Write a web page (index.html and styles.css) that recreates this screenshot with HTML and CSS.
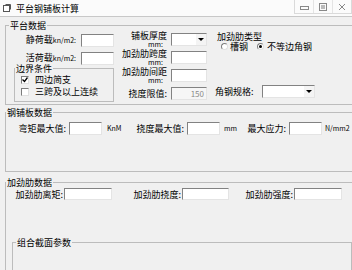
FILE: index.html
```html
<!DOCTYPE html>
<html lang="zh">
<head>
  <meta charset="UTF-8">
  <title>平台钢铺板计算</title>
  <link rel="stylesheet" href="styles.css">
</head>
<body>
  <div class="titlebar">
    <svg class="app-icon" width="8" height="8" viewBox="0 0 8 8">
      <rect x="0.5" y="1.5" width="6" height="6" fill="#fff" stroke="#555"/>
      <path d="M2.5 0.5h5v5" fill="none" stroke="#555"/>
    </svg>
    <span class="title">平台钢铺板计算</span>
    <div class="win-btns">
      <span><svg width="9" height="7" viewBox="0 0 9 7"><rect x="0.5" y="3.5" width="8" height="3" fill="none" stroke="#888"/></svg></span>
      <span><svg width="8" height="8" viewBox="0 0 8 8"><rect x="0.5" y="0.5" width="7" height="7" fill="none" stroke="#888"/><rect x="2" y="2" width="4" height="4" fill="#bbb"/></svg></span>
      <span><svg width="8" height="8" viewBox="0 0 8 8"><path d="M1 1l6 6M7 1l-6 6" stroke="#888"/></svg></span>
    </div>
  </div>

  <div class="form">
    <fieldset class="group wide platform">
      <legend>平台数据</legend>
      <div class="platform-body">
        <div class="col-load">
          <div class="load-row"><label>静荷载<span class="latin">kn/m2:</span></label><input class="box w33" type="text"></div>
          <div class="load-row"><label>活荷载<span class="latin">kn/m2:</span></label><input class="box w33" type="text"></div>
          <fieldset class="group boundary">
            <legend>边界条件</legend>
            <div class="check-row first">
              <span class="check"><svg width="6" height="6" viewBox="0 0 6 6"><path d="M0.5 2.5l2 2 3-4" fill="none" stroke="#000" stroke-width="1.3"/></svg></span>四边简支
            </div>
            <div class="check-row"><span class="check"></span>三跨及以上连续</div>
          </fieldset>
        </div>

        <div class="col-plate">
          <div class="plate-row">
            <label class="two-line">铺板厚度<span>mm:</span></label>
            <span class="box combo w36"><span class="arrow"></span></span>
          </div>
          <div class="plate-row">
            <label class="two-line">加劲肋跨度<span>mm:</span></label>
            <input class="box w36" type="text">
          </div>
          <div class="plate-row">
            <label class="two-line">加劲肋间距<span>mm:</span></label>
            <input class="box w36" type="text">
          </div>
          <div class="plate-row single">
            <label>挠度限值:</label>
            <input class="box w36 disabled" type="text" value="150" disabled>
          </div>
        </div>

        <div class="col-rib">
          <div class="rib-type">加劲肋类型</div>
          <div class="radio-row">
            <span class="radio"></span>槽钢
            <span class="radio on second"></span>不等边角钢
          </div>
          <div class="spec-row">
            <label>角钢规格:</label>
            <span class="box combo w53"><span class="arrow"></span></span>
          </div>
        </div>
      </div>
    </fieldset>

    <fieldset class="group wide plate-data">
      <legend>钢铺板数据</legend>
      <div class="plate-body">
        <div class="field-row">
          <label class="lbl" style="width:59px">弯矩最大值:</label>
          <input class="box w33" type="text">
          <span class="unit" style="margin-left:5px;width:21px">KnM</span>
          <label class="lbl" style="width:59px">挠度最大值:</label>
          <input class="box w33" type="text">
          <span class="unit" style="margin-left:4px;width:18px">mm</span>
          <label class="lbl" style="width:47px">最大应力:</label>
          <input class="box w33" type="text">
          <span class="unit" style="margin-left:3px">N/mm2</span>
        </div>
      </div>
    </fieldset>

    <fieldset class="group wide rib-data">
      <legend>加劲肋数据</legend>
      <div class="rib-row">
        <label class="lbl" style="width:54px">加劲肋离矩:</label>
        <input class="box w48" type="text">
        <label class="lbl" style="width:70px">加劲肋挠度:</label>
        <input class="box w47" type="text">
        <label class="lbl" style="width:65px">加劲肋强度:</label>
        <input class="box w48" type="text">
      </div>
      <fieldset class="group section">
        <legend>组合截面参数</legend>
        <div class="section-body"></div>
      </fieldset>
    </fieldset>
  </div>
</body>
</html>
```

FILE: styles.css
```css
body {
  margin: 0;
  width: 352px;
  height: 270px;
  overflow: hidden;
  background: #f0f0f0;
  color: #000;
  font-family: "Noto Sans CJK SC", "Noto Sans", sans-serif;
  font-size: 9px;
  line-height: 11px;
}
.titlebar {
  height: 16px;
  background: #fbfbfb;
  border-bottom: 1px solid #c8c8c8;
  display: flex;
  align-items: center;
}
.app-icon {
  margin: 0 5px 0 3px;
}
.title {
  flex: 1;
}
.win-btns {
  align-self: flex-start;
  display: flex;
  height: 13px;
  border: 1px solid #dadada;
  border-top: none;
}
.win-btns span {
  width: 18px;
  display: flex;
  align-items: center;
  justify-content: center;
  border-left: 1px solid #e4e4e4;
}
.win-btns span:first-child {
  border-left: none;
}

/* group boxes */
.group {
  margin: 0;
  padding: 0;
  min-width: 0;
  border: 1px solid #bcbcbc;
  box-sizing: border-box;
}
.group > legend {
  padding: 0 1px;
  line-height: 11px;
  font-size: 9px;
}
.wide {
  width: 350px;
  margin-left: 5px;
}
.platform {
  margin-top: 3px;
}
.platform > legend {
  margin-left: 3px;
}
.plate-data {
  margin-top: 2px;
}
.rib-data {
  margin-top: 5px;
}

/* inputs */
.box {
  box-sizing: border-box;
  display: block;
  height: 13px;
  margin: 0;
  padding: 0 2px;
  border: 1px solid;
  border-color: #828282 #e4e4e4 #e4e4e4 #828282;
  background: #fff;
  font: inherit;
  outline: none;
}
.w33 { width: 33px; }
.w36 { width: 36px; }
.w47 { width: 47px; }
.w48 { width: 48px; }
.w53 { width: 53px; }
.disabled {
  background: #f6f6f6;
  color: #8a8a8a;
  text-align: right;
  font-size: 8px;
}
.combo {
  display: flex;
  justify-content: flex-end;
  align-items: stretch;
  padding: 0;
}
.combo .arrow {
  width: 10px;
  background: #f4f4f4;
  display: flex;
  align-items: center;
  justify-content: center;
}
.combo .arrow::after {
  content: "";
  border-left: 3px solid transparent;
  border-right: 3px solid transparent;
  border-top: 3px solid #000;
}
.latin {
  font-size: 7px;
}

/* platform data */
.platform-body {
  display: flex;
  height: 73px;
}
.col-load {
  width: 108px;
}
.load-row {
  height: 18px;
  display: flex;
  align-items: center;
  justify-content: flex-end;
}
.load-row label {
  margin-right: 5px;
  white-space: nowrap;
}
.boundary {
  margin: -4px 0 0 8px;
  width: 100px;
}
.check-row {
  height: 13px;
  display: flex;
  align-items: center;
  padding-left: 6px;
}
.check-row.first {
  height: 11px;
}
.check-row:last-child {
  margin-bottom: 3px;
}
.check {
  box-sizing: border-box;
  width: 8px;
  height: 8px;
  margin-right: 6px;
  border: 1px solid;
  border-color: #7c7c7c #e0e0e0 #e0e0e0 #7c7c7c;
  background: #fff;
  display: flex;
  align-items: center;
  justify-content: center;
}

.col-plate {
  width: 96px;
  padding-right: 3px;
  box-sizing: border-box;
}
.plate-row {
  height: 18px;
  display: flex;
  align-items: flex-start;
  justify-content: flex-end;
}
.plate-row .box {
  margin-top: 2px;
}
.plate-row label {
  margin-right: 4px;
  text-align: right;
  white-space: nowrap;
}
.two-line {
  line-height: 10px;
}
.two-line span {
  display: block;
  padding-right: 4px;
  font-size: 7px;
  line-height: 7px;
}
.plate-row.single {
  height: 16px;
  align-items: center;
}
.plate-row.single .box {
  margin-top: 0;
}

.col-rib {
  flex: 1;
  padding-left: 7px;
}
.rib-type {
  margin-top: 2px;
  line-height: 8px;
}
.radio-row {
  display: flex;
  align-items: center;
  height: 10px;
  padding-left: 4px;
}
.radio {
  box-sizing: border-box;
  width: 7px;
  height: 7px;
  margin-right: 2px;
  border-radius: 50%;
  border: 1px solid;
  border-color: #7c7c7c #e0e0e0 #e0e0e0 #7c7c7c;
  background: #fff;
  display: flex;
  align-items: center;
  justify-content: center;
}
.radio.second {
  margin-left: 9px;
  margin-right: 3px;
}
.radio.on::after {
  content: "";
  width: 3px;
  height: 3px;
  border-radius: 50%;
  background: #000;
}
.spec-row {
  display: flex;
  align-items: center;
  margin: 34px 0 0 -2px;
  height: 13px;
}
.spec-row label {
  width: 47px;
  white-space: nowrap;
}

/* plate / rib data rows */
.plate-body {
  height: 53px;
}
.field-row {
  display: flex;
  align-items: center;
  height: 14px;
  padding: 3px 0 0 4px;
}
.lbl {
  box-sizing: border-box;
  text-align: right;
  padding-right: 3px;
  white-space: nowrap;
}
.unit {
  font-size: 7px;
  white-space: nowrap;
}
.rib-row {
  display: flex;
  align-items: center;
  height: 12px;
  padding-left: 4px;
}
.rib-row .box {
  height: 12px;
}
.rib-row .lbl {
  padding-right: 1px;
}
.section {
  margin: 37px 0 0 6px;
  width: 340px;
}
.section > legend {
  margin-left: 3px;
}
.section-body {
  height: 40px;
}
```
